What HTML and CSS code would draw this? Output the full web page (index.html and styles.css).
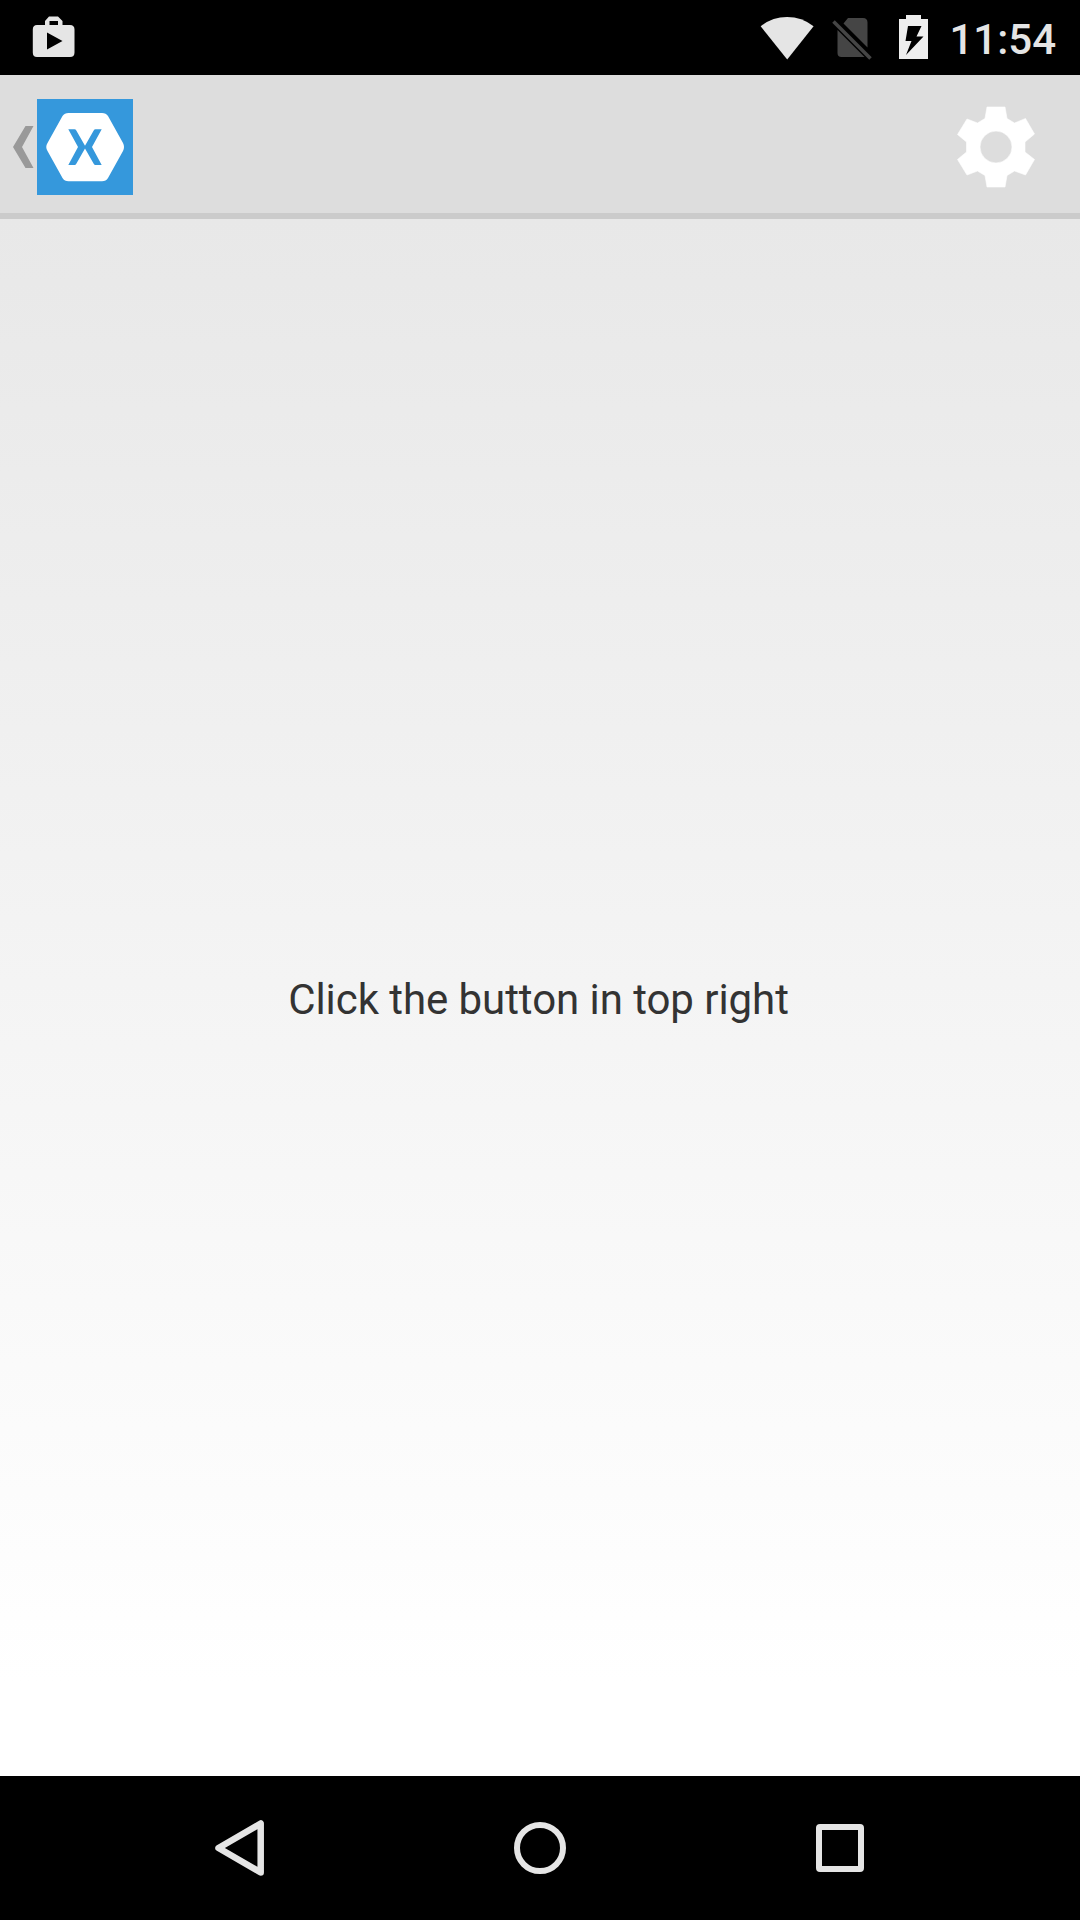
FILE: index.html
```html
<!DOCTYPE html>
<html lang="en">
<head>
<meta charset="utf-8">
<title>Click the button in top right</title>
<link rel="stylesheet" href="styles.css">
</head>
<body>
<div class="screen">
  <header class="status-bar">
    <svg class="store-icon" width="44" height="42" viewBox="0 0 44 42" aria-hidden="true">
      <path fill="#e5e5e5" fill-rule="evenodd" d="M5 9H13V5L17 0.500H26L30.500 5V9H38Q42.500 9 42.500 13.500V36.500Q42.500 41 38 41H5Q0.800 41 0.800 36.500V13.500Q0.800 9 5 9ZM17.500 5V9H26V5ZM15 16.500V33.500L30.500 25Z"/>
    </svg>
    <div class="status-tray">
      <svg class="wifi-icon" width="54" height="44" viewBox="0 0 54 44" aria-hidden="true">
        <path fill="#e5e5e5" d="M0.700 10.300Q12 1 27 1T53.600 10.300L27.200 43.500Z"/>
      </svg>
      <svg class="sim-icon" width="40" height="44" viewBox="0 0 40 44" aria-hidden="true">
        <path fill="#454545" d="M16 2H31Q35.500 2 35.500 6.500V31.500L11.500 7.500ZM5.500 14L32.500 41H9.500Q5.500 41 5.500 37Z"/>
        <path stroke="#454545" stroke-width="3.600" d="M1.500 5.500L38.500 42.500"/>
      </svg>
      <svg class="battery-icon" width="29" height="44" viewBox="0 0 29 44" aria-hidden="true">
        <path fill="#eee" fill-rule="evenodd" d="M7 0H22V4H29V44H0V4H7ZM9 11L6.500 26H12.500L7 40L24.500 21.500H17.500L22.500 11Z"/>
      </svg>
      <span class="clock">11:54</span>
    </div>
  </header>
  <nav class="action-bar">
    <svg class="up-icon" width="24" height="48" viewBox="0 0 24 48" aria-hidden="true">
      <path fill="#999" d="M12.500 3H20.500L9 24L20.500 45H12.500L0 24Z"/>
    </svg>
    <svg class="app-logo" width="96" height="96" viewBox="0 0 96 96" aria-hidden="true">
      <path fill="#3598dc" d="M0 0H96V96H0Z"/>
      <path fill="#fff" d="M31.500 14H65Q69 14 71 17L86 44Q88 48 86 52L71 79Q69 82.300 65 82.300H31.500Q27.500 82.300 25.500 79L10.500 52Q8 48 10.500 44L25.500 17Q27.500 14 31.500 14Z"/>
      <path fill="#3598dc" d="M31.300 30.300H37.500Q38.700 30.300 39.300 31.500L48 46.700L56.700 31.500Q57.300 30.300 58.500 30.300H64.700L55 48L64.700 66H58.500Q57.300 66 56.700 64.700L48 49.500L39.300 64.700Q38.700 66 37.500 66H31.300L41 48Z"/>
    </svg>
    <svg class="settings-icon" width="80" height="84" viewBox="0 0 80 84" aria-hidden="true">
      <path fill="#fff" fill-rule="evenodd" stroke="#fff" stroke-opacity="0.6" stroke-linejoin="round" d="M31 2H49L51 13.500L58.500 18L69.500 13.500L78.500 29L69 37V47L78.500 54.500L69.500 70L58.500 66L51 70.500L49 82H31L29 70.500L21.500 66L11 70L1.500 54.500L10.500 47V37L1.500 29.500L11 14L21.500 18L29 13.500ZM40 26A16 16 0 1 0 40 58A16 16 0 1 0 40 26Z"/>
    </svg>
  </nav>
  <main class="content">
    <p class="message">Click the button in top right</p>
  </main>
  <footer class="nav-bar">
    <svg width="60" height="60" viewBox="0 0 60 60" aria-hidden="true">
      <path fill="none" stroke="#e5e5e5" stroke-width="6.500" stroke-linejoin="round" d="M50.700 5.500V54.500L8.500 30Z"/>
    </svg>
    <svg width="60" height="60" viewBox="0 0 60 60" aria-hidden="true">
      <circle cx="30" cy="30" r="23" fill="none" stroke="#e5e5e5" stroke-width="6"/>
    </svg>
    <svg width="60" height="60" viewBox="0 0 60 60" aria-hidden="true">
      <path fill="#e5e5e5" fill-rule="evenodd" d="M10 6H50Q54 6 54 10V50Q54 54 50 54H10Q6 54 6 50V10Q6 6 10 6ZM12 12V48H48V12Z"/>
    </svg>
  </footer>
</div>
</body>
</html>
```
FILE: styles.css
```css
* {
  box-sizing: border-box;
}

body {
  margin: 0;
  font-family: Roboto, "Liberation Sans", sans-serif;
}

svg {
  display: block;
  flex: none;
}

.screen {
  display: flex;
  flex-direction: column;
  width: 1080px;
  height: 1920px;
  overflow: hidden;
}

.status-bar {
  display: flex;
  align-items: flex-start;
  justify-content: space-between;
  height: 75px;
  padding: 15px 24px 0 32px;
  background: #000;
}

.store-icon {
  margin-top: 1px;
}

.status-tray {
  display: flex;
}

.wifi-icon {
  margin-top: 1px;
}

.sim-icon {
  margin: 1px 0 0 18px;
}

.battery-icon {
  margin-left: 27px;
}

.clock {
  margin-left: 21px;
  color: #e5e5e5;
  font-size: 42px;
  font-weight: 500;
  line-height: 49px;
}

.action-bar {
  display: flex;
  align-items: center;
  height: 144px;
  padding: 6px 44px 0 13px;
  background: #ddd;
  border-bottom: 6px solid #cbcbcb;
}

.settings-icon {
  margin-left: auto;
}

.content {
  display: flex;
  flex: 1;
  align-items: center;
  justify-content: center;
  padding: 4px 3px 0 0;
  background: linear-gradient(#e8e8e8, #fff 94%);
}

.message {
  margin: 0;
  color: #333;
  font-size: 42px;
  line-height: 49px;
  letter-spacing: -0.06px;
}

.nav-bar {
  display: flex;
  align-items: center;
  justify-content: center;
  gap: 240px;
  height: 144px;
  background: #000;
}
```
